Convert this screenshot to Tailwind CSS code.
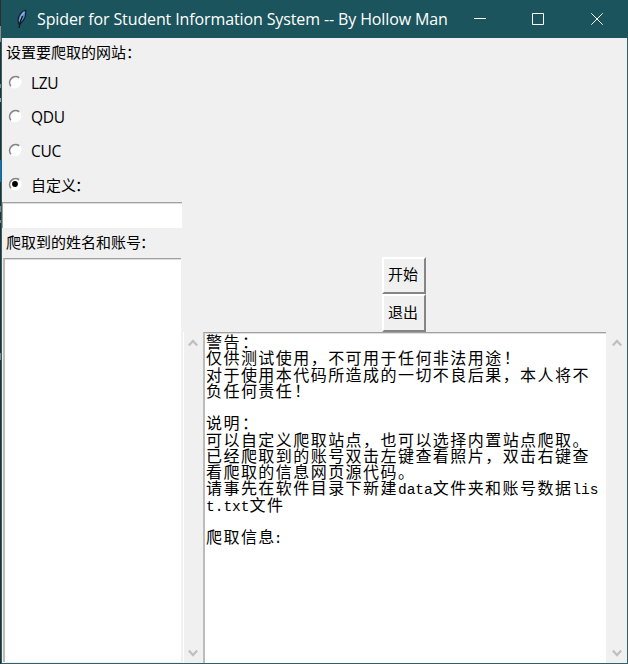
<!DOCTYPE html>
<html lang="zh-CN">
<head>
<meta charset="utf-8">
<title>Spider for Student Information System</title>
<script src="https://cdn.jsdelivr.net/npm/@tailwindcss/browser@4"></script>
</head>
<body class="w-[628px] h-[664px] overflow-hidden flex bg-[#2b2d2f]">
  <!-- strip of the desktop behind the window -->
  <div class="w-px h-full flex flex-col shrink-0">
    <div class="h-[26px]"></div><div class="h-[16px] bg-[#8b8b8b]"></div>
    <div class="h-[42px]"></div><div class="h-[4px] bg-[#858789]"></div>
    <div class="h-[10px]"></div><div class="h-[4px] bg-[#a0a0a0]"></div>
    <div class="h-[58px]"></div><div class="h-[22px] bg-[#0874c4]"></div>
    <div class="h-[24px]"></div><div class="h-[6px] bg-[#858789]"></div>
    <div class="h-[8px]"></div><div class="h-[3px] bg-[#858789]"></div>
    <div class="h-[130px]"></div><div class="h-[7px] bg-[#858789]"></div>
  </div>
  <div class="w-[627px] h-[664px] flex flex-col bg-[#f0f0f0] border-x border-b border-[#2f6168] text-black">
    <header class="h-[38px] -mr-px -ml-px bg-[#1b545c] flex shrink-0 items-center text-white">
      <svg class="ml-[13px] w-[16px] h-[22px] shrink-0" viewBox="0 0 16 22">
        <path d="M11.700 2.200C8 3 4.300 7 4 12.500L5 16.200C8.500 14.500 11.500 10 11.800 5.500Z" fill="#4f86c8" stroke="#101c28" stroke-width="1.100"/>
        <path d="M10.300 4C8 6 6.300 10 5.800 13.500" stroke="#8fb8e6" stroke-width="1.300" fill="none"/>
        <path d="M8.500 8L6.300 13.500L5.200 20" stroke="#0b1219" stroke-width="1.300" fill="none"/>
      </svg>
      <div class="ml-[7px] w-[416px] shrink-0 whitespace-nowrap font-['Open_Sans','Noto_Sans',sans-serif] text-[16px] tracking-[-0.12px] leading-[38px]">Spider for Student Information System -- By Hollow Man</div>
      <svg class="ml-auto w-[174px] h-[38px] shrink-0" viewBox="0 0 174 38" fill="none" stroke="#fff">
        <path d="M20 18.500h12M78.500 13.500h11v11h-11zM137.300 13.300l11.400 11.400M148.700 13.300l-11.400 11.400"/>
      </svg>
    </header>
    <main class="flex flex-1 min-h-0 font-['Noto_Sans_CJK_SC',sans-serif] text-[15px]">
      <section class="w-[181px] flex flex-col shrink-0">
        <div class="h-[28px] pl-[4px] leading-[28px] whitespace-nowrap">设置要爬取的网站<span class="ml-0">：</span></div>
        <div class="h-[136px] grid grid-rows-4 font-['Open_Sans','Noto_Sans_CJK_SC',sans-serif] text-[15.5px] tracking-[-0.3px]">
          <label class="flex items-center pl-[6px] gap-[9px]"><svg class="w-[14px] h-[14px] shrink-0 mb-[2px]" viewBox="0 0 14 14"><circle cx="7" cy="7" r="6.500" fill="#fff"/><path d="M2.800 11.200A6 6 0 0 1 11.200 2.800" fill="none" stroke="#858585" stroke-width="1.700"/></svg><span class="mt-[2px]">LZU</span></label>
          <label class="flex items-center pl-[6px] gap-[9px]"><svg class="w-[14px] h-[14px] shrink-0 mb-[2px]" viewBox="0 0 14 14"><circle cx="7" cy="7" r="6.500" fill="#fff"/><path d="M2.800 11.200A6 6 0 0 1 11.200 2.800" fill="none" stroke="#858585" stroke-width="1.700"/></svg><span class="mt-[2px]">QDU</span></label>
          <label class="flex items-center pl-[6px] gap-[9px]"><svg class="w-[14px] h-[14px] shrink-0 mb-[2px]" viewBox="0 0 14 14"><circle cx="7" cy="7" r="6.500" fill="#fff"/><path d="M2.800 11.200A6 6 0 0 1 11.200 2.800" fill="none" stroke="#858585" stroke-width="1.700"/></svg><span class="mt-[2px]">CUC</span></label>
          <label class="flex items-center pl-[6px] gap-[9px]"><svg class="w-[14px] h-[14px] shrink-0 mb-[2px]" viewBox="0 0 14 14"><circle cx="7" cy="7" r="6.500" fill="#fff"/><path d="M2.800 11.200A6 6 0 0 1 11.200 2.800" fill="none" stroke="#858585" stroke-width="1.700"/><circle cx="7" cy="7" r="2.900" fill="#000"/></svg><span class="font-['Noto_Sans_CJK_SC',sans-serif] text-[15px] tracking-normal leading-[20px]">自定义<span class="-ml-px">：</span></span></label>
        </div>
        <div class="h-[26px] mr-px bg-white border-t border-l border-[#a0a0a0] shadow-[inset_0_1px_0_#dedede]"></div>
        <div class="h-[30px] pl-[4px] leading-[28px] whitespace-nowrap">爬取到的姓名和账号<span class="-ml-px">：</span></div>
        <div class="flex-1 ml-px mr-[2px] mb-px bg-white border-t border-l-2 border-t-[#a0a0a0] border-l-[#bcbcbc] shadow-[inset_0_1px_0_#dedede]"></div>
      </section>
      <div class="w-[20px] mt-[294px] flex flex-col justify-between items-center border-l border-white shrink-0 pt-[6px] pb-[5px] pr-[2px]">
        <svg class="w-[10px] h-[10px]" viewBox="0 0 10 10" fill="none" stroke="#c0c0c0" stroke-width="2.300"><path d="M.8 7.500L5 3l4.200 4.500"/></svg>
        <svg class="w-[10px] h-[10px]" viewBox="0 0 10 10" fill="none" stroke="#c0c0c0" stroke-width="2.300"><path d="M.8 2.500L5 7l4.200-4.500"/></svg>
      </div>
      <section class="w-[424px] flex flex-col pt-[219px] shrink-0">
        <div class="w-[44px] ml-[179px] flex flex-col shrink-0">
          <button class="h-[37px] pr-px border-2 border-t-white border-l-white border-r-[#858585] border-b-[#858585] text-center whitespace-nowrap leading-[30px]"><span class="block -ml-px mb-[3px]">开始</span></button>
          <button class="h-[38px] pr-px border-2 border-t-white border-l-white border-r-[#858585] border-b-[#858585] text-center whitespace-nowrap leading-[32px]"><span class="block -ml-px mb-[2px]">退出</span></button>
        </div>
        <div class="flex flex-1 min-h-0">
          <div class="w-[403px] mr-px bg-white border-t border-l-2 border-t-[#a0a0a0] border-l-[#bcbcbc] shadow-[inset_0_1px_0_#dedede] pl-px text-[16px] leading-[16.25px] tracking-[1.45px] whitespace-nowrap shrink-0">
            <p class="h-[16.25px]">警告<span class="ml-px">：</span></p>
            <p class="h-[16.25px]">仅供测试使用，不可用于任何非法用途<span class="ml-px">！</span></p>
            <p class="h-[16.25px]">对于使用本代码所造成的一切不良后果，本人将不</p>
            <p class="h-[16.25px]">负任何责任<span class="ml-px">！</span></p>
            <p class="h-[16.25px]"></p>
            <p class="h-[16.25px]">说明<span class="ml-px">：</span></p>
            <p class="h-[16.25px]">可以自定义爬取站点，也可以选择内置站点爬取。</p>
            <p class="h-[16.25px]">已经爬取到的账号双击左键查看照片，双击右键查</p>
            <p class="h-[16.25px]">看爬取的信息网页源代码。</p>
            <p class="h-[16.25px]">请事先在软件目录下新建<span class="font-['Liberation_Mono',monospace] text-[14.5px] tracking-normal">data</span>文件夹和账号数据<span class="font-['Liberation_Mono',monospace] text-[14.5px] tracking-normal">lis</span></p>
            <p class="h-[16.25px]"><span class="font-['Liberation_Mono',monospace] text-[14.5px] tracking-normal">t.txt</span>文件</p>
            <p class="h-[16.25px]"></p>
            <p class="h-[16.25px]">爬取信息<span class="-ml-[2px] font-['Liberation_Mono',monospace] text-[14.5px] tracking-normal">:</span></p>
          </div>
          <div class="w-[20px] flex flex-col justify-between items-center pt-[6px] pb-[5px] pr-px shrink-0">
            <svg class="w-[10px] h-[10px]" viewBox="0 0 10 10" fill="none" stroke="#c0c0c0" stroke-width="2.300"><path d="M.8 7.500L5 3l4.200 4.500"/></svg>
            <svg class="w-[10px] h-[10px]" viewBox="0 0 10 10" fill="none" stroke="#c0c0c0" stroke-width="2.300"><path d="M.8 2.500L5 7l4.200-4.500"/></svg>
          </div>
        </div>
      </section>
    </main>
  </div>
</body>
</html>
